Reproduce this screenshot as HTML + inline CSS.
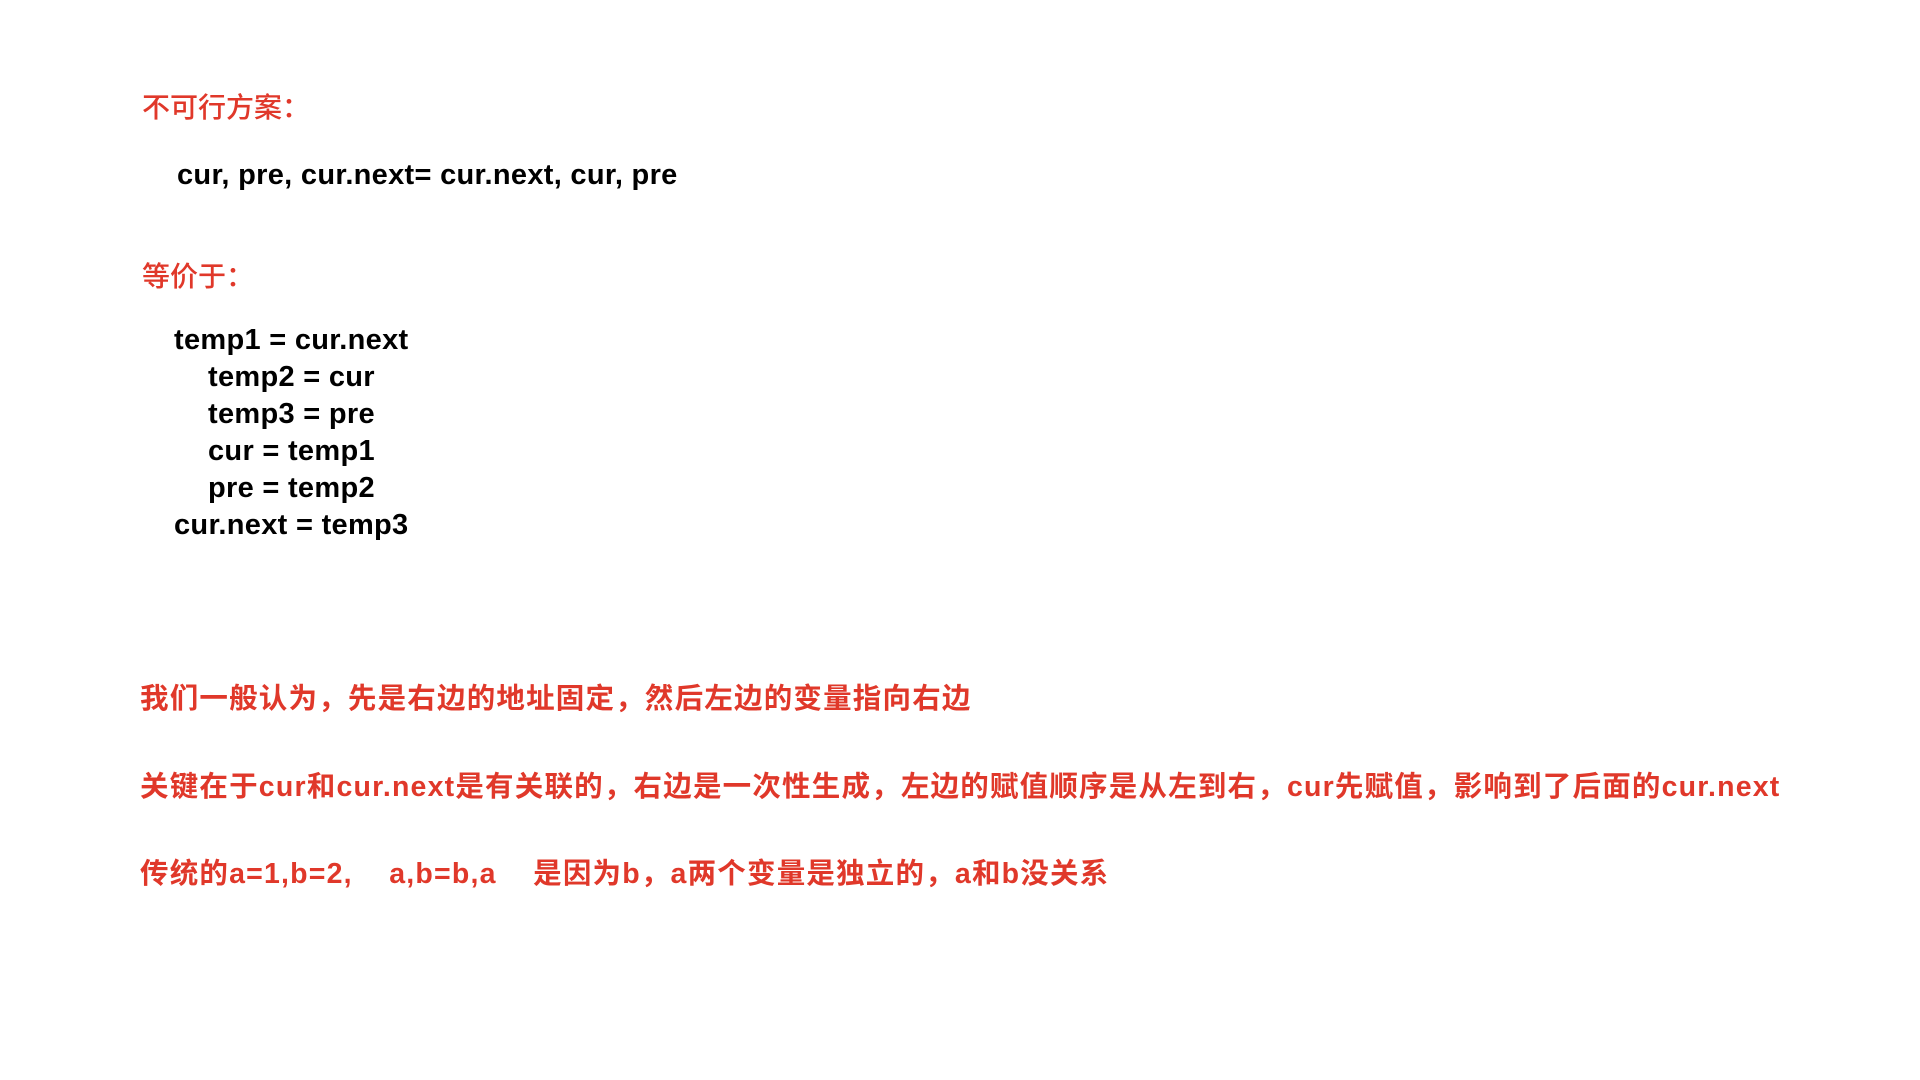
<!DOCTYPE html>
<html><head><meta charset="utf-8"><style>
body{margin:0;width:1920px;height:1080px;background:#fff;position:relative;overflow:hidden;font-family:"Liberation Sans","Noto Sans CJK SC",sans-serif}
div{position:absolute;white-space:pre;line-height:1}
.r{color:#e0382a}
.k{color:#000;font-weight:bold;font-size:29px;letter-spacing:0.3px}
.rb{color:#e0382a;font-weight:bold;font-size:28.5px;letter-spacing:1.2px}
</style></head><body>
<div class="r" style="left:142px;top:94px;font-size:28px;font-weight:500">不可行方案：</div>
<div class="k" style="left:177px;top:161px">cur, pre, cur.next= cur.next, cur, pre</div>
<div class="r" style="left:142px;top:263px;font-size:28px;font-weight:500">等价于：</div>
<div class="k" style="left:174px;top:326px">temp1 = cur.next</div>
<div class="k" style="left:208px;top:363px">temp2 = cur</div>
<div class="k" style="left:208px;top:400px">temp3 = pre</div>
<div class="k" style="left:208px;top:437px">cur = temp1</div>
<div class="k" style="left:208px;top:474px">pre = temp2</div>
<div class="k" style="left:174px;top:511px">cur.next = temp3</div>
<div class="rb" style="left:140px;top:685px">我们一般认为，先是右边的地址固定，然后左边的变量指向右边</div>
<div class="rb" style="left:140px;top:773px">关键在于cur和cur.next是有关联的，右边是一次性生成，左边的赋值顺序是从左到右，cur先赋值，影响到了后面的cur.next</div>
<div class="rb" style="left:140px;top:860px">传统的a=1,b=2,    a,b=b,a    是因为b，a两个变量是独立的，a和b没关系</div>
</body></html>
